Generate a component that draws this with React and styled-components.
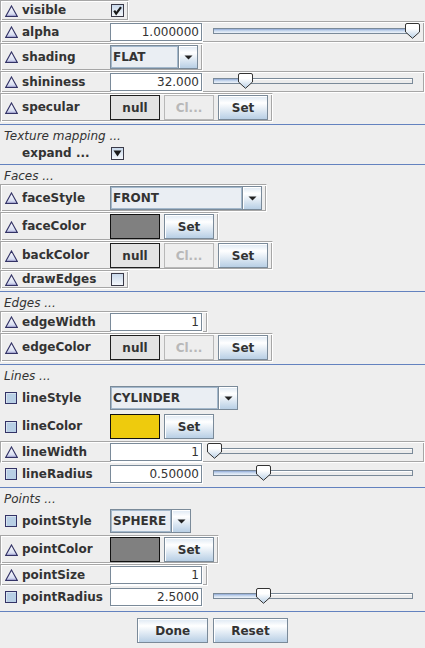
import React from 'react';
import styled, { createGlobalStyle, css } from 'styled-components';

const GlobalStyle = createGlobalStyle`
  html, body { margin: 0; padding: 0; background: #eeeeee; }
  body {
    font-family: "DejaVu Sans", "Liberation Sans", sans-serif;
    font-size: 12px;
    color: #333333;
  }
`;

const Panel = styled.div`
  width: 425px;
  height: 648px;
  display: flex;
  flex-direction: column;
  background: #eeeeee;
  overflow: hidden;
`;

const Section = styled.div`
  display: flex;
  flex-direction: column;
  align-items: flex-start;
  border-top: ${(p) => (p.$first ? 'none' : '1px solid #6382bf')};
  padding-bottom: ${(p) => p.$pad ?? 2}px;
`;

const SectionTitle = styled.div`
  height: 19px;
  box-sizing: border-box;
  padding: 3px 0 0 4px;
  line-height: 16px;
  font-style: italic;
  white-space: nowrap;
`;

const Row = styled.div`
  display: flex;
  align-items: center;
  box-sizing: border-box;
  height: ${(p) => p.$h}px;
  align-self: ${(p) => (p.$full ? 'stretch' : 'flex-start')};
  padding: 1px 4px 1px 1px;
  border: 1px solid transparent;
  ${(p) =>
    p.$etched &&
    css`
      border-color: #a6a6a6 #ffffff #ffffff #a6a6a6;
      box-shadow: inset 1px 1px 0 #ffffff, inset -1px -1px 0 #a6a6a6;
    `}
`;

const Label = styled.div`
  width: 108px;
  flex: none;
  box-sizing: border-box;
  display: flex;
  align-items: center;
  gap: 4px;
  padding-left: ${(p) => p.$indent ?? 3}px;
  font-weight: bold;
  white-space: nowrap;
  line-height: 15px;
`;

const Controls = styled.div`
  display: flex;
  align-items: center;
  gap: 4px;
`;

const SquareIcon = styled.span`
  display: block;
  width: 12px;
  height: 12px;
  box-sizing: border-box;
  border: 1px solid #333366;
  background: #b8cfe5;
  box-shadow: inset 1px 1px 0 #d6e2ef;
  margin: 0 1px 0 0;
`;

const TriangleSvg = styled.svg`
  display: block;
  flex: none;
`;

function TriangleIcon() {
  return (
    <TriangleSvg width="13" height="12" viewBox="0 0 13 12">
      <defs>
        <linearGradient id="triFill" x1="0" y1="0" x2="0" y2="1">
          <stop offset="0" stopColor="#ffffff" />
          <stop offset="1" stopColor="#cdd5ee" />
        </linearGradient>
      </defs>
      <polygon
        points="6.5,0.9 12.3,11.4 0.7,11.4"
        fill="url(#triFill)"
        stroke="#333366"
        strokeWidth="1.1"
      />
      <line x1="2.2" y1="10.3" x2="10.8" y2="10.3" stroke="#a7a7d4" strokeWidth="1" />
    </TriangleSvg>
  );
}

const Field = styled.div`
  width: 92px;
  height: 18px;
  margin-right: 1px;
  flex: none;
  box-sizing: border-box;
  border: 1px solid #7a8a99;
  box-shadow: 1px 1px 0 #ffffff;
  background: #ffffff;
  text-align: right;
  padding-right: 2px;
  line-height: 16px;
  white-space: nowrap;
`;

const SliderBox = styled.div`
  position: relative;
  width: 200px;
  height: 18px;
  margin-left: 10px;
  flex: none;
`;

const Track = styled.div`
  margin-top: 5px;
  height: 6px;
  box-sizing: border-box;
  border: 1px solid #7a8a99;
  background: #ececec;
  box-shadow: inset 0 1px 0 #ffffff;
  overflow: hidden;
`;

const TrackFill = styled.div`
  height: 100%;
  background: linear-gradient(#8fa8d6, #c9daee 45%, #eef3fa);
`;

const ThumbSvg = styled.svg`
  position: absolute;
  top: 0;
  display: block;
`;

function Slider({ value }) {
  const px = value * 200;
  return (
    <SliderBox>
      <Track>
        <TrackFill style={{ width: `${px}px` }} />
      </Track>
      <ThumbSvg width="15" height="16" viewBox="0 0 15 16" style={{ left: `${px - 7.5}px` }}>
        <defs>
          <linearGradient id="thumbFill" x1="0" y1="0" x2="0" y2="1">
            <stop offset="0" stopColor="#ffffff" />
            <stop offset="0.35" stopColor="#ffffff" />
            <stop offset="1" stopColor="#b8cfe5" />
          </linearGradient>
        </defs>
        <path
          d="M2,0.5 H13 Q14.5,0.5 14.5,2 V9 L7.5,15.3 L0.5,9 V2 Q0.5,0.5 2,0.5 Z"
          fill="url(#thumbFill)"
          stroke="#333333"
          strokeWidth="1"
        />
      </ThumbSvg>
    </SliderBox>
  );
}

const Combo = styled.div`
  display: flex;
  width: ${(p) => p.$w}px;
  height: 24px;
  box-sizing: border-box;
  border: 1px solid #7a8a99;
  flex: none;
`;

const ComboValue = styled.div`
  flex: 1;
  display: flex;
  align-items: center;
  padding-left: 2px;
  font-weight: bold;
  background: #eaeef3;
  box-shadow: inset 0 0 0 1px #a3b8cc;
  white-space: nowrap;
  overflow: hidden;
`;

const ComboArrow = styled.div`
  width: 18px;
  flex: none;
  border-left: 1px solid #7a8a99;
  background: linear-gradient(#dde8f3, #ffffff 30%, #b8cfe5);
  box-shadow: inset 1px 1px 0 #ffffff;
  display: flex;
  align-items: center;
  justify-content: center;
`;

function ComboBox({ value, width }) {
  return (
    <Combo $w={width}>
      <ComboValue>{value}</ComboValue>
      <ComboArrow>
        <svg width="9" height="5" viewBox="0 0 9 5">
          <polygon points="0.5,0.5 8.5,0.5 4.5,4.5" fill="#222222" />
        </svg>
      </ComboArrow>
    </Combo>
  );
}

const Button = styled.button`
  font-family: "DejaVu Sans", "Liberation Sans", sans-serif;
  font-size: 12px;
  font-weight: bold;
  color: #333333;
  height: 25px;
  box-sizing: border-box;
  margin: 0;
  flex: none;
  width: ${(p) => (p.$w ? `${p.$w}px` : 'auto')};
  padding: ${(p) => (p.$w ? '0' : '0 17px')};
  border: 1px solid #7a8a99;
  background: linear-gradient(#dde8f3, #ffffff 30%, #b8cfe5);
  box-shadow: inset 1px 1px 0 #ffffff;
  white-space: nowrap;
  ${(p) =>
    p.$variant === 'null' &&
    css`
      background: #e3e3e3;
      border-color: #1e1e1e;
      box-shadow: none;
    `}
  ${(p) =>
    p.$variant === 'disabled' &&
    css`
      background: #eeeeee;
      border-color: #b8b8b8;
      color: #b8b8b8;
      box-shadow: none;
    `}
`;

const Swatch = styled.div`
  width: 50px;
  height: 25px;
  box-sizing: border-box;
  border: 1px solid #111111;
  background: ${(p) => p.$color};
  flex: none;
`;

const CheckBox = styled.span`
  display: flex;
  align-items: center;
  justify-content: center;
  width: 13px;
  height: 13px;
  margin-left: 1px;
  box-sizing: border-box;
  border: 1px solid #3a3a48;
  background: linear-gradient(#c9d9eb, #f4f7fb);
  flex: none;
`;

function Check({ mark }) {
  return (
    <CheckBox>
      {mark === 'check' && (
        <svg width="11" height="11" viewBox="0 0 11 11">
          <path d="M2.2,5.6 L4.2,8.6 L9,2.2" fill="none" stroke="#1a1a1a" strokeWidth="2.2" />
        </svg>
      )}
      {mark === 'down' && (
        <svg width="11" height="11" viewBox="0 0 11 11">
          <polygon points="1.5,2.5 9.5,2.5 5.5,8.5" fill="#1a1a1a" />
        </svg>
      )}
    </CheckBox>
  );
}

const BottomBar = styled.div`
  display: flex;
  justify-content: center;
  gap: 5px;
  padding-top: 6px;
  border-top: 1px solid #6382bf;
`;

function Prop({ name, icon = 'tri', etched = true, full, h, children }) {
  return (
    <Row $h={h} $etched={etched} $full={full}>
      <Label>
        {icon === 'tri' ? <TriangleIcon /> : <SquareIcon />}
        {name}
      </Label>
      {children}
    </Row>
  );
}

function ColorButtons({ color }) {
  if (color) {
    return (
      <Controls>
        <Swatch $color={color} />
        <Button $w={50}>Set</Button>
      </Controls>
    );
  }
  return (
    <Controls>
      <Button $w={50} $variant="null">null</Button>
      <Button $w={50} $variant="disabled">Cl...</Button>
      <Button $w={50}>Set</Button>
    </Controls>
  );
}

export default function App() {
  return (
    <>
      <GlobalStyle />
      <Panel>
        <Section $first>
          <Prop name="visible" h={21}>
            <Check mark="check" />
          </Prop>
          <Prop name="alpha" h={22} full>
            <Field>1.000000</Field>
            <Slider value={0.995} />
          </Prop>
          <Prop name="shading" h={28}>
            <ComboBox value="FLAT" width={88} />
          </Prop>
          <Prop name="shininess" h={22} full>
            <Field>32.000</Field>
            <Slider value={0.1625} />
          </Prop>
          <Prop name="specular" h={29}>
            <ColorButtons />
          </Prop>
        </Section>

        <Section>
          <SectionTitle>Texture mapping ...</SectionTitle>
          <Row $h={18}>
            <Label $indent={20}>expand ...</Label>
            <Check mark="down" />
          </Row>
        </Section>

        <Section>
          <SectionTitle>Faces ...</SectionTitle>
          <Prop name="faceStyle" h={28}>
            <ComboBox value="FRONT" width={152} />
          </Prop>
          <Prop name="faceColor" h={29}>
            <ColorButtons color="#808080" />
          </Prop>
          <Prop name="backColor" h={29}>
            <ColorButtons />
          </Prop>
          <Prop name="drawEdges" h={19}>
            <Check />
          </Prop>
        </Section>

        <Section>
          <SectionTitle>Edges ...</SectionTitle>
          <Prop name="edgeWidth" h={22}>
            <Field>1</Field>
          </Prop>
          <Prop name="edgeColor" h={29}>
            <ColorButtons />
          </Prop>
        </Section>

        <Section>
          <SectionTitle>Lines ...</SectionTitle>
          <Prop name="lineStyle" icon="square" etched={false} h={28}>
            <ComboBox value="CYLINDER" width={128} />
          </Prop>
          <Prop name="lineColor" icon="square" etched={false} h={29}>
            <ColorButtons color="#eecb0d" />
          </Prop>
          <Prop name="lineWidth" h={22} full>
            <Field>1</Field>
            <Slider value={0.005} />
          </Prop>
          <Prop name="lineRadius" icon="square" etched={false} h={22} full>
            <Field>0.50000</Field>
            <Slider value={0.2525} />
          </Prop>
        </Section>

        <Section $pad={3}>
          <SectionTitle>Points ...</SectionTitle>
          <Prop name="pointStyle" icon="square" etched={false} h={28}>
            <ComboBox value="SPHERE" width={81} />
          </Prop>
          <Prop name="pointColor" h={29}>
            <ColorButtons color="#808080" />
          </Prop>
          <Prop name="pointSize" h={22}>
            <Field>1</Field>
          </Prop>
          <Prop name="pointRadius" icon="square" etched={false} h={22} full>
            <Field>2.5000</Field>
            <Slider value={0.2525} />
          </Prop>
        </Section>

        <BottomBar>
          <Button>Done</Button>
          <Button>Reset</Button>
        </BottomBar>
      </Panel>
    </>
  );
}
